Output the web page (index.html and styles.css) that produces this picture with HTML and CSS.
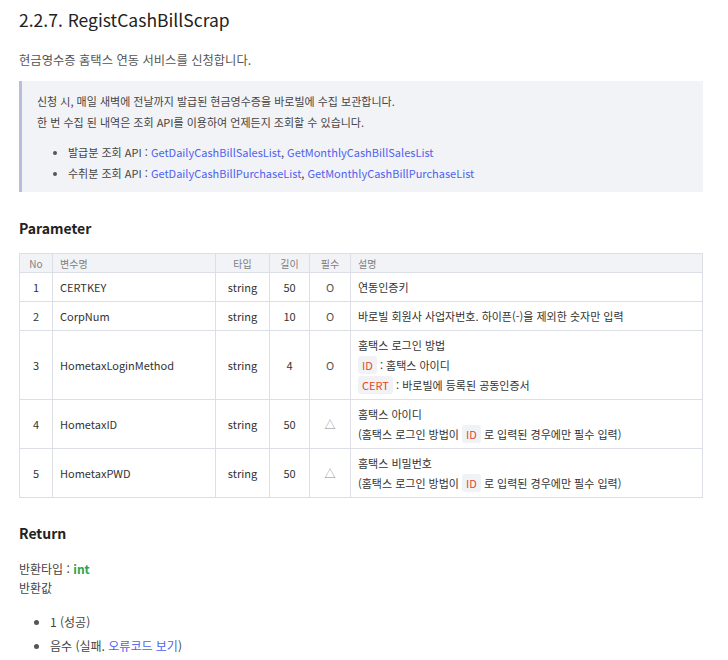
FILE: index.html
```html
<!DOCTYPE html>
<html lang="ko">
<head>
<meta charset="utf-8">
<link rel="stylesheet" href="styles.css">
</head>
<body>
<div class="page">
  <h1 class="title">2.2.7. RegistCashBillScrap</h1>
  <p class="lead">현금영수증 홈택스 연동 서비스를 신청합니다.</p>
  <div class="note">
    <p class="note-text">신청 시, 매일 새벽에 전날까지 발급된 현금영수증을 바로빌에 수집 보관합니다.<br>한 번 수집 된 내역은 조회 API를 이용하여 언제든지 조회할 수 있습니다.</p>
    <ul class="note-list">
      <li>발급분 조회 API : <a class="link">GetDailyCashBillSalesList</a>, <a class="link">GetMonthlyCashBillSalesList</a></li>
      <li>수취분 조회 API : <a class="link">GetDailyCashBillPurchaseList</a>, <a class="link">GetMonthlyCashBillPurchaseList</a></li>
    </ul>
  </div>

  <h2 class="section">Parameter</h2>
  <table class="params">
    <thead>
      <tr>
        <th class="c-no">No</th>
        <th class="c-name">변수명</th>
        <th class="c-type">타입</th>
        <th class="c-len">길이</th>
        <th class="c-req">필수</th>
        <th class="c-desc">설명</th>
      </tr>
    </thead>
    <tbody>
      <tr>
        <td class="c-no">1</td>
        <td class="c-name">CERTKEY</td>
        <td class="c-type">string</td>
        <td class="c-len">50</td>
        <td class="c-req">O</td>
        <td class="c-desc">연동인증키</td>
      </tr>
      <tr>
        <td class="c-no">2</td>
        <td class="c-name">CorpNum</td>
        <td class="c-type">string</td>
        <td class="c-len">10</td>
        <td class="c-req">O</td>
        <td class="c-desc">바로빌 회원사 사업자번호. 하이픈(-)을 제외한 숫자만 입력</td>
      </tr>
      <tr>
        <td class="c-no">3</td>
        <td class="c-name">HometaxLoginMethod</td>
        <td class="c-type">string</td>
        <td class="c-len">4</td>
        <td class="c-req">O</td>
        <td class="c-desc">홈택스 로그인 방법<br><code class="badge">ID</code> : 홈택스 아이디<br><code class="badge">CERT</code> : 바로빌에 등록된 공동인증서</td>
      </tr>
      <tr>
        <td class="c-no">4</td>
        <td class="c-name">HometaxID</td>
        <td class="c-type">string</td>
        <td class="c-len">50</td>
        <td class="c-req tri">△</td>
        <td class="c-desc">홈택스 아이디<br>(홈택스 로그인 방법이 <code class="badge">ID</code> 로 입력된 경우에만 필수 입력)</td>
      </tr>
      <tr>
        <td class="c-no">5</td>
        <td class="c-name">HometaxPWD</td>
        <td class="c-type">string</td>
        <td class="c-len">50</td>
        <td class="c-req tri">△</td>
        <td class="c-desc">홈택스 비밀번호<br>(홈택스 로그인 방법이 <code class="badge">ID</code> 로 입력된 경우에만 필수 입력)</td>
      </tr>
    </tbody>
  </table>

  <h2 class="section ret">Return</h2>
  <p class="ret-text">반환타입 : <strong class="type">int</strong><br>반환값</p>
  <ul class="ret-list">
    <li>1 (성공)</li>
    <li>음수 (실패. <a class="link">오류코드 보기</a>)</li>
  </ul>
</div>
</body>
</html>
```

FILE: styles.css
```css
* { box-sizing: border-box; }
html, body { margin: 0; padding: 0; background: #fff; }
body {
  font-family: "Noto Sans CJK KR", "Noto Sans", sans-serif;
  color: #444;
  font-size: 11px;
}
.page {
  padding: 0 25px 0 19px;
}
.title {
  margin: 0;
  padding-top: 8px;
  font-size: 17.5px;
  font-weight: 400;
  line-height: 24px;
  color: #222;
}
.lead {
  margin: 18px 0 0;
  font-size: 12.3px;
  line-height: 20px;
  color: #555;
}
.note {
  margin-top: 11px;
  background: #f2f3f7;
  border-left: 3px solid #b7bedd;
  padding: 10px 15px 8px 15px;
}
.note-text {
  margin: 0;
  font-size: 11px;
  line-height: 21px;
  color: #444;
}
.note-list {
  margin: 9px 0 0;
  padding-left: 31px;
  font-size: 11px;
  line-height: 21px;
  color: #444;
}
.note-list li::marker { color: #555; }
.link {
  color: #4e62ee;
  text-decoration: none;
}
.section {
  margin: 26px 0 0;
  font-size: 14px;
  font-weight: 700;
  line-height: 20px;
  color: #222;
}
.params {
  margin-top: 15px;
  width: 100%;
  border-collapse: collapse;
  font-size: 11px;
  color: #333;
}
.params th, .params td {
  border: 1px solid #dcdfe6;
  padding: 0 7px;
  vertical-align: middle;
}
.params th {
  background: #f2f3f7;
  font-size: 10px;
  font-weight: 400;
  color: #808080;
  height: 19px;
  line-height: 17px;
  text-align: left;
}
.params td {
  height: 29px;
  line-height: 20px;
  padding-top: 4px;
  padding-bottom: 4px;
}
.params .c-no { width: 33px; text-align: center; }
.params .c-name { width: 163px; }
.params .c-type { width: 54px; text-align: center; }
.params .c-len { width: 40px; text-align: center; }
.params .c-req { width: 41px; text-align: center; }
.params td.c-req { color: #555; }
.params td.tri { color: #888; }
.badge {
  font-family: "Noto Sans CJK KR", "Noto Sans", sans-serif;
  font-size: 11px;
  color: #e4461e;
  background: #f1f2f5;
  border-radius: 3px;
  padding: 1px 4px;
}
.ret {
  margin-top: 25px;
}
.ret-text {
  margin: 16px 0 0;
  font-size: 12px;
  line-height: 19px;
  color: #444;
}
.type {
  color: #2aa44a;
  font-weight: 700;
}
.ret-list {
  margin: 13px 0 0;
  padding-left: 31px;
  font-size: 12px;
  line-height: 24px;
  color: #444;
}
.ret-list li::marker { color: #555; }
```
